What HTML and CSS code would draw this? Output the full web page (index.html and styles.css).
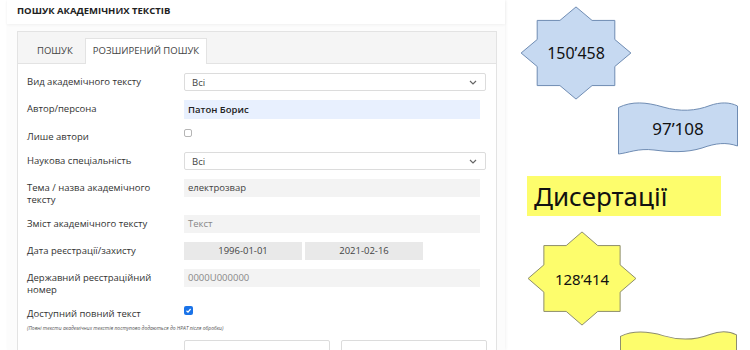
FILE: index.html
```html
<!DOCTYPE html>
<html lang="uk">
<head>
    <meta charset="UTF-8">
    <meta name="viewport" content="width=device-width, initial-scale=1.0">
    <title>Пошук академічних текстів</title>
    <link rel="stylesheet" href="styles.css">
</head>
<body>
<div class="page">
    <section class="search-panel">
        <h1 class="panel-title">Пошук академічних текстів</h1>
        <div class="card">
            <div class="card-head">
                <div class="tab">Пошук</div>
                <div class="tab tab-active">Розширений пошук</div>
            </div>
            <div class="card-body">
                <div class="row">
                    <div class="row-label">Вид академічного тексту</div>
                    <div class="select"><span>Всі</span><svg class="chevron" viewBox="0 0 8 5"><path d="M1 1 L4 4 L7 1"/></svg></div>
                </div>
                <div class="row">
                    <div class="row-label">Автор/персона</div>
                    <div class="field field-author">Патон Борис</div>
                </div>
                <div class="row row-check">
                    <div class="row-label">Лише автори</div>
                    <span class="check"></span>
                </div>
                <div class="row">
                    <div class="row-label">Наукова спеціальність</div>
                    <div class="select"><span>Всі</span><svg class="chevron" viewBox="0 0 8 5"><path d="M1 1 L4 4 L7 1"/></svg></div>
                </div>
                <div class="row">
                    <div class="row-label">Тема / назва академічного тексту</div>
                    <div class="field">електрозвар</div>
                </div>
                <div class="row">
                    <div class="row-label">Зміст академічного тексту</div>
                    <div class="field field-empty">Текст</div>
                </div>
                <div class="row">
                    <div class="row-label">Дата реєстрації/захисту</div>
                    <div class="dates">
                        <div class="date">1996-01-01</div>
                        <div class="date">2021-02-16</div>
                    </div>
                </div>
                <div class="row">
                    <div class="row-label">Державний реєстраційний номер</div>
                    <div class="field field-empty">0000U000000</div>
                </div>
                <div class="row row-check row-full">
                    <div class="row-label">Доступний повний текст</div>
                    <span class="check check-on"><svg viewBox="0 0 9 9"><path d="M2.5 4.8 L4 6.2 L6.6 3"/></svg></span>
                </div>
                <p class="note">(Повні тексти академічних текстів поступово додаються до НРАТ після обробки)</p>
                <div class="row">
                    <div class="row-label"></div>
                    <div class="pair">
                        <div class="box"></div>
                        <div class="box"></div>
                    </div>
                </div>
            </div>
        </div>
    </section>

    <aside class="stats">
        <div class="shape star">
            <svg viewBox="-1 -1 102 102" preserveAspectRatio="none"><polygon class="fill-blue" points="50,0 64.64,14.66 85.36,14.64 85.34,35.36 100,50 85.34,64.64 85.36,85.36 64.64,85.34 50,100 35.36,85.34 14.64,85.36 14.66,64.64 0,50 14.66,35.36 14.64,14.64 35.36,14.66"/></svg>
            <span class="shape-text">150’458</span>
        </div>
        <div class="shape wave">
            <svg viewBox="0 0 120 55" preserveAspectRatio="none"><path class="fill-blue" d="M0.5,5.5 C14,-1 28,0 45,5 C62,10 78,9 92,3.5 C102,0 112,0 119.5,4 L119.5,44 C108,40 98,41 84,46 C68,51 52,50 36,48 C20,46 10,51 0.5,52 Z"/></svg>
            <span class="shape-text">97’108</span>
        </div>
        <div class="label-box">Дисертації</div>
        <div class="shape star star-yellow">
            <svg viewBox="-1 -1 102 102" preserveAspectRatio="none"><polygon class="fill-yellow" points="50,0 64.64,14.66 85.36,14.64 85.34,35.36 100,50 85.34,64.64 85.36,85.36 64.64,85.34 50,100 35.36,85.34 14.64,85.36 14.66,64.64 0,50 14.66,35.36 14.64,14.64 35.36,14.66"/></svg>
            <span class="shape-text small">128’414</span>
        </div>
        <div class="shape wave wave-yellow">
            <svg viewBox="0 0 120 55" preserveAspectRatio="none"><path class="fill-yellow" d="M0.5,5.5 C14,-1 28,0 45,5 C62,10 78,9 92,3.5 C102,0 112,0 119.5,4 L119.5,44 C108,40 98,41 84,46 C68,51 52,50 36,48 C20,46 10,51 0.5,52 Z"/></svg>
        </div>
    </aside>
</div>
</body>
</html>
```

FILE: styles.css
```css
body {
    margin: 0;
    font-family: "Open Sans", "Noto Sans", sans-serif;
    background: #fff;
}
.page {
    display: flex;
    height: 350px;
    overflow: hidden;
}

/* left: search form */
.search-panel {
    flex: none;
    width: 498px;
    margin-left: 7px;
    background: #fcfcfc;
    box-shadow: 1px 0 3px rgba(0, 0, 0, 0.05);
}
.panel-title {
    margin: 0;
    height: 24px;
    box-sizing: border-box;
    padding: 4px 0 0 10px;
    font-size: 9.5px;
    font-weight: 700;
    color: #222;
    text-transform: uppercase;
    background: #fff;
    box-shadow: 0 1px 3px rgba(0, 0, 0, 0.05);
}
.card {
    margin: 7px 8px 0 10px;
    border: 1px solid #e3e3e3;
    background: #fff;
}
.card-head {
    display: flex;
    align-items: flex-end;
    height: 31px;
    padding-left: 9px;
    background: #f5f5f5;
    border-bottom: 1px solid #e3e3e3;
}
.tab {
    height: 24px;
    line-height: 24px;
    padding: 0 10px;
    font-size: 9.5px;
    color: #444;
    text-transform: uppercase;
}
.tab-active {
    height: 25px;
    margin: 0 0 -1px 2px;
    padding: 0 7px;
    background: #fff;
    border: 1px solid #e3e3e3;
    border-bottom: none;
}
.card-body { padding: 9px 10px 0 9px; }

.row {
    display: flex;
    align-items: flex-start;
    margin-bottom: 9px;
}
.row-label {
    flex: none;
    width: 150px;
    margin-right: 7px;
    padding-top: 3px;
    font-size: 9.5px;
    line-height: 12px;
    color: #333;
}
.select {
    display: flex;
    align-items: center;
    justify-content: space-between;
    width: 302px;
    height: 18px;
    box-sizing: border-box;
    padding: 0 8px 0 7px;
    border: 1px solid #dcdcdc;
    border-radius: 2px;
    font-size: 9.5px;
    color: #444;
}
.chevron { width: 8px; height: 5px; }
.chevron path { fill: none; stroke: #666; stroke-width: 1.2; }
.field {
    width: 296px;
    height: 18px;
    box-sizing: border-box;
    padding-left: 4px;
    line-height: 18px;
    font-size: 9.5px;
    color: #444;
    background: #f3f3f3;
}
.field-author {
    height: 19px;
    line-height: 19px;
    font-weight: 600;
    color: #222;
    background: #e8f0fe;
}
.field-empty { color: #888; }
.dates { display: flex; gap: 3px; }
.date {
    width: 118px;
    height: 18px;
    line-height: 18px;
    text-align: center;
    font-size: 9.5px;
    color: #444;
    background: #e9e9e9;
}
.row-check { margin-bottom: 9px; }
.check {
    width: 8px;
    height: 8px;
    margin-top: 1px;
    box-sizing: border-box;
    border: 1px solid #b5b5b5;
    border-radius: 2px;
    background: #fff;
}
.row-full { margin-top: 2px; margin-bottom: 4px; }
.check-on {
    width: 9px;
    height: 9px;
    border: none;
    background: #1a73e8;
}
.check-on svg { display: block; width: 9px; height: 9px; }
.check-on path { fill: none; stroke: #fff; stroke-width: 1.2; }
.note {
    margin: 0 0 8px;
    font-size: 5px;
    line-height: 8px;
    font-style: italic;
    color: #555;
}
.pair { display: flex; gap: 11px; }
.box {
    width: 146px;
    height: 19px;
    border: 1px solid #dcdcdc;
    border-radius: 2px;
    box-sizing: border-box;
}

/* right: counters */
.stats {
    flex: 1;
    display: flex;
    flex-direction: column;
    align-items: flex-start;
    font-family: "Noto Sans", "Open Sans", sans-serif;
    color: #111;
}
.shape {
    display: grid;
    place-items: center;
}
.shape > * { grid-area: 1 / 1; }
.shape svg { width: 100%; height: 100%; display: block; }
.fill-blue { fill: #c6d9f1; stroke: #6f8cb3; stroke-width: 1; vector-effect: non-scaling-stroke; }
.fill-yellow { fill: #fdfd6c; stroke: #8e8e6e; stroke-width: 1; vector-effect: non-scaling-stroke; }
.shape-text { font-size: 16px; }
.shape-text.small { font-size: 15px; }
.star {
    width: 112px;
    height: 94px;
    margin: 6px 0 0 15px;
}
.wave {
    width: 120px;
    height: 55px;
    margin: 2px 0 0 113px;
}
.wave .shape-text { font-size: 17px; margin-top: -2px; }
.label-box {
    width: 194px;
    height: 42px;
    margin: 19px 0 0 22px;
    box-sizing: border-box;
    padding-left: 7px;
    line-height: 40px;
    font-size: 26px;
    background: #fdfd6c;
}
.star-yellow {
    width: 110px;
    height: 95px;
    margin: 15px 0 0 22px;
}
.wave-yellow {
    width: 117px;
    margin: 5px 0 0 115px;
}
```
